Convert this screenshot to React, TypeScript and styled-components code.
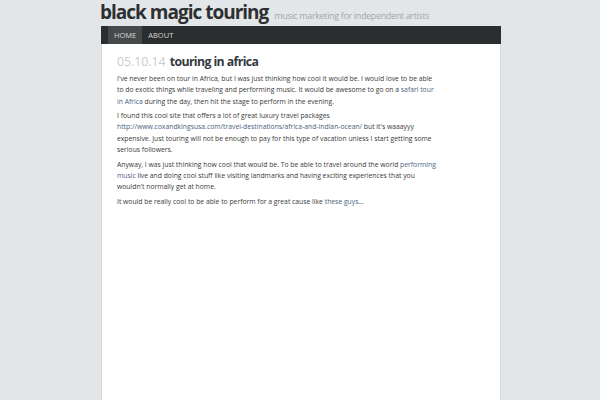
import styled, { createGlobalStyle } from "styled-components";

const colors = {
  page: "#e3e6e9",
  nav: "#2b2e2f",
  navActive: "#45494a",
  navText: "#d8dadb",
  title: "#2d2f31",
  tagline: "#a2a6aa",
  date: "#c9ccce",
  postTitle: "#343a40",
  text: "#3a3a3a",
  link: "#4a6380",
  border: "#d5d9dc",
};

const GlobalStyle = createGlobalStyle`
  body {
    margin: 0;
    background: ${colors.page};
    font-family: "Open Sans", "DejaVu Sans", sans-serif;
  }
`;

const Page = styled.div`
  width: 400px;
  padding-left: 2px;
  margin: 0 auto;
  display: flex;
  flex-direction: column;
  min-height: 400px;
`;

const Header = styled.header`
  display: flex;
  align-items: baseline;
  gap: 6px;
  height: 26px;
  margin-left: -1px;
  white-space: nowrap;
`;

const SiteTitle = styled.h1`
  margin: 0;
  font-size: 19px;
  line-height: 24px;
  font-weight: 700;
  letter-spacing: -1px;
  color: ${colors.title};
`;

const Tagline = styled.span`
  font-size: 9px;
  color: ${colors.tagline};
  letter-spacing: -0.35px;
`;

const Nav = styled.nav`
  display: flex;
  height: 18px;
  padding-left: 7px;
  background: ${colors.nav};
`;

const NavItem = styled.a<{ $active?: boolean }>`
  display: flex;
  align-items: center;
  padding: 0 6px;
  font-size: 7.5px;
  color: ${colors.navText};
  text-decoration: none;
  background: ${(p) => (p.$active ? colors.navActive : "transparent")};
`;

const Content = styled.main`
  flex: 1;
  background: #fff;
  border-left: 1px solid ${colors.border};
  border-right: 1px solid ${colors.border};
  padding: 9px 61px 0 15px;
`;

const PostHeading = styled.h2`
  margin: 0 0 2px;
  display: flex;
  align-items: baseline;
  gap: 4px;
  font-size: 12.3px;
  line-height: 18px;
`;

const PostDate = styled.span`
  font-weight: 400;
  color: ${colors.date};
`;

const PostTitle = styled.span`
  font-weight: 700;
  color: ${colors.postTitle};
  letter-spacing: -0.6px;
`;

const Paragraph = styled.p`
  margin: 0 0 3.3px;
  font-size: 6.8px;
  line-height: 11.3px;
  color: ${colors.text};
`;

const Link = styled.a`
  color: ${colors.link};
  text-decoration: none;
`;

export default function App() {
  return (
    <>
      <GlobalStyle />
      <Page>
        <Header>
          <SiteTitle>black magic touring</SiteTitle>
          <Tagline>music marketing for independent artists</Tagline>
        </Header>
        <Nav>
          <NavItem $active>HOME</NavItem>
          <NavItem>ABOUT</NavItem>
        </Nav>
        <Content>
          <PostHeading>
            <PostDate>05.10.14</PostDate>
            <PostTitle>touring in africa</PostTitle>
          </PostHeading>
          <Paragraph>
            I've never been on tour in Africa, but I was just thinking how cool
            it would be. I would love to be able to do exotic things while
            traveling and performing music. It would be awesome to go on a{" "}
            <Link>safari tour in Africa</Link> during the day, then hit the
            stage to perform in the evening.
          </Paragraph>
          <Paragraph>
            I found this cool site that offers a lot of great luxury travel
            packages{" "}
            <Link>
              http://www.coxandkingsusa.com/travel-destinations/africa-and-indian-ocean/
            </Link>{" "}
            but it's waaayyy expensive. Just touring will not be enough to pay
            for this type of vacation unless I start getting some serious
            followers.
          </Paragraph>
          <Paragraph>
            Anyway, I was just thinking how cool that would be. To be able to
            travel around the world <Link>performing music</Link> live and doing
            cool stuff like visiting landmarks and having exciting experiences
            that you wouldn't normally get at home.
          </Paragraph>
          <Paragraph>
            It would be really cool to be able to perform for a great cause like{" "}
            <Link>these guys</Link>...
          </Paragraph>
        </Content>
      </Page>
    </>
  );
}
